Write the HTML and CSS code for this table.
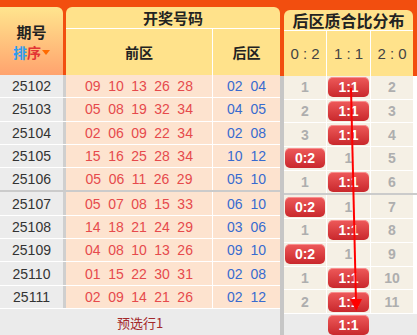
FILE: index.html
```html
<!DOCTYPE html>
<html lang="zh">
<head>
<meta charset="utf-8">
<title>后区质合比分布</title>
<link rel="stylesheet" href="styles.css">
</head>
<body>
<div class="board">
  <div class="main">
    <div class="main-head">
      <div class="h-period">
        <div class="h-title">期号</div>
        <div class="sort"><span class="s1">排</span><span class="s2">序</span><span class="caret"></span></div>
      </div>
      <div class="h-draw">
        <div class="h-draw-title">开奖号码</div>
        <div class="h-draw-sub">
          <div class="h-front">前区</div>
          <div class="h-back">后区</div>
        </div>
      </div>
    </div>
    <div class="rows">
      <div class="row"><div class="c-period">25102</div><div class="c-front"><span>09</span><span>10</span><span>13</span><span>26</span><span>28</span></div><div class="c-back"><span>02</span><span>04</span></div></div>
      <div class="row"><div class="c-period">25103</div><div class="c-front"><span>05</span><span>08</span><span>19</span><span>32</span><span>34</span></div><div class="c-back"><span>04</span><span>05</span></div></div>
      <div class="row"><div class="c-period">25104</div><div class="c-front"><span>02</span><span>06</span><span>09</span><span>22</span><span>34</span></div><div class="c-back"><span>02</span><span>08</span></div></div>
      <div class="row"><div class="c-period">25105</div><div class="c-front"><span>15</span><span>16</span><span>25</span><span>28</span><span>34</span></div><div class="c-back"><span>10</span><span>12</span></div></div>
      <div class="row sep"><div class="c-period">25106</div><div class="c-front"><span>05</span><span>06</span><span>11</span><span>26</span><span>29</span></div><div class="c-back"><span>05</span><span>10</span></div></div>
      <div class="row"><div class="c-period">25107</div><div class="c-front"><span>05</span><span>07</span><span>08</span><span>15</span><span>33</span></div><div class="c-back"><span>06</span><span>10</span></div></div>
      <div class="row"><div class="c-period">25108</div><div class="c-front"><span>14</span><span>18</span><span>21</span><span>24</span><span>29</span></div><div class="c-back"><span>03</span><span>06</span></div></div>
      <div class="row"><div class="c-period">25109</div><div class="c-front"><span>04</span><span>08</span><span>10</span><span>13</span><span>26</span></div><div class="c-back"><span>09</span><span>10</span></div></div>
      <div class="row"><div class="c-period">25110</div><div class="c-front"><span>01</span><span>15</span><span>22</span><span>30</span><span>31</span></div><div class="c-back"><span>02</span><span>08</span></div></div>
      <div class="row"><div class="c-period">25111</div><div class="c-front"><span>02</span><span>09</span><span>14</span><span>21</span><span>26</span></div><div class="c-back"><span>02</span><span>12</span></div></div>
    </div>
    <div class="foot">预选行1</div>
  </div>

  <div class="dist">
    <div class="dist-head">
      <div class="dist-inner">
        <div class="dist-title">后区质合比分布</div>
        <div class="dist-sub"><div>0 : 2</div><div>1 : 1</div><div>2 : 0</div></div>
      </div>
    </div>
    <div class="dist-rows">
      <div class="drow"><div>1</div><div><span class="badge">1:1</span></div><div>2</div></div>
      <div class="drow"><div>2</div><div><span class="badge">1:1</span></div><div>3</div></div>
      <div class="drow"><div>3</div><div><span class="badge">1:1</span></div><div>4</div></div>
      <div class="drow"><div><span class="badge">0:2</span></div><div>1</div><div>5</div></div>
      <div class="drow sep"><div>1</div><div><span class="badge">1:1</span></div><div>6</div></div>
      <div class="drow"><div><span class="badge">0:2</span></div><div>1</div><div>7</div></div>
      <div class="drow"><div>1</div><div><span class="badge">1:1</span></div><div>8</div></div>
      <div class="drow"><div><span class="badge">0:2</span></div><div>1</div><div>9</div></div>
      <div class="drow"><div>1</div><div><span class="badge">1:1</span></div><div>10</div></div>
      <div class="drow"><div>2</div><div><span class="badge">1:1</span></div><div>11</div></div>
    </div>
    <div class="dist-foot"><div></div><div><span class="badge">1:1</span></div><div></div></div>
    <svg class="trend" width="137" height="335" viewBox="0 0 137 335">
      <line x1="71" y1="88" x2="76" y2="302" stroke="#ff0000" stroke-width="2"/>
      <polygon points="70,299 82,299 76.3,311" fill="#ff0000"/>
    </svg>
  </div>
</div>
</body>
</html>
```
FILE: styles.css
```css
* { box-sizing: border-box; }
body {
  margin: 0;
  font-family: "Liberation Sans", Arial, "Noto Sans CJK SC", sans-serif;
  background: #ebebeb;
}
.board {
  display: flex;
  width: 417px;
  height: 335px;
  overflow: hidden;
  background: #ebebeb;
}

/* ---------- main table ---------- */
.main {
  width: 280px;
  display: flex;
  flex-direction: column;
}
.main-head {
  display: flex;
  gap: 3px;
  height: 75px;
  padding-top: 7px;
  background: #f24e0f;
}
.h-period {
  width: 63px;
  border-radius: 0 6px 0 0;
  background: linear-gradient(#ffe58e, #ffa36e);
  display: flex;
  flex-direction: column;
  align-items: center;
  justify-content: center;
  padding-top: 1px;
}
.h-title {
  height: 21px;
  display: flex;
  align-items: center;
  font-family: "Noto Sans CJK SC", sans-serif;
  font-size: 15px;
  font-weight: bold;
  line-height: 1;
  color: #222;
}
.sort {
  height: 21px;
  display: flex;
  align-items: center;
  font-family: "Noto Sans CJK SC", sans-serif;
  font-size: 14px;
  font-weight: bold;
  line-height: 1;
}
.s1 { color: #2e9cf0; }
.s2 { color: #e23434; }
.caret {
  width: 0;
  height: 0;
  margin-left: 1px;
  border-left: 4px solid transparent;
  border-right: 4px solid transparent;
  border-top: 5px solid #ff6a00;
}
.h-draw {
  flex: 1;
  border-radius: 6px 6px 0 0;
  background: #ffe28b;
  display: flex;
  flex-direction: column;
}
.h-draw-title {
  height: 22px;
  border-bottom: 1px solid #fff;
  display: flex;
  align-items: center;
  justify-content: center;
  font-family: "Noto Sans CJK SC", sans-serif;
  font-size: 15px;
  font-weight: bold;
  line-height: 1;
  color: #222;
}
.h-draw-sub {
  flex: 1;
  display: flex;
  font-family: "Noto Sans CJK SC", sans-serif;
  font-size: 14px;
  font-weight: bold;
  color: #222;
}
.h-front {
  width: 146px;
  display: flex;
  align-items: center;
  justify-content: center;
}
.h-back {
  flex: 1;
  border-left: 1px solid #fff;
  display: flex;
  align-items: center;
  justify-content: center;
}

.rows {
  display: flex;
  flex-direction: column;
}
.row {
  display: flex;
  height: 23.3px;
  border-bottom: 1px solid #fff;
  font-size: 14px;
}
.row.sep {
  height: 24.3px;
  border-bottom: 2px solid #cbcbcb;
}
.c-period {
  width: 66px;
  border-right: 3px solid #cfcfcf;
  background: #ececec;
  color: #333;
  display: flex;
  align-items: center;
  justify-content: center;
}
.c-front {
  width: 146px;
  background: #fde3cf;
  color: #e64a4c;
  display: flex;
  align-items: center;
  justify-content: center;
  gap: 7.5px;
}
.c-back {
  flex: 1;
  border-left: 1px solid #fff;
  background: #fde3cf;
  color: #386bcf;
  display: flex;
  align-items: center;
  justify-content: center;
  gap: 8px;
}
.foot {
  flex: 1;
  background: #ebebeb;
  color: #a3282a;
  display: flex;
  justify-content: center;
  padding-top: 6px;
  font-family: "Noto Sans CJK SC", sans-serif;
  font-size: 13px;
  line-height: 16px;
}

/* ---------- distribution ---------- */
.dist {
  width: 137px;
  position: relative;
  display: flex;
  flex-direction: column;
}
.dist-head {
  height: 76px;
  padding: 10px 4px 0 4px;
  background: #f24e0f;
}
.dist-inner {
  height: 100%;
  border-radius: 6px 6px 0 0;
  background: #ffe28b;
  display: flex;
  flex-direction: column;
}
.dist-title {
  height: 21px;
  border-bottom: 1px solid #fff;
  display: flex;
  align-items: center;
  justify-content: center;
  font-family: "Noto Sans CJK SC", sans-serif;
  font-size: 16px;
  font-weight: bold;
  line-height: 1;
  color: #222;
  white-space: nowrap;
}
.dist-sub {
  flex: 1;
  display: grid;
  grid-template-columns: 42px 43px 42px;
  column-gap: 1px;
  background: #fff;
}
.dist-sub div {
  background: #ffe28b;
  display: flex;
  align-items: center;
  justify-content: center;
  font-size: 15px;
  color: #444;
}
.dist-rows {
  border-left: 4px solid #c6c6c6;
  background: #ebe7df;
}
.drow {
  height: 23.7px;
  border-bottom: 1px solid #fff;
  display: grid;
  grid-template-columns: 42px 43px 42px 4px;
  column-gap: 1px;
  background: #fff;
}
.drow.sep {
  border-bottom: 2px solid #cbcbcb;
  height: 24.7px;
}
.drow div {
  background: #f5f0e5;
  display: flex;
  align-items: center;
  justify-content: center;
  font-size: 14px;
  font-weight: bold;
  color: #aeaeae;
}
.dist-foot {
  flex: 1;
  border-left: 4px solid #c6c6c6;
  display: grid;
  grid-template-columns: 42px 43px 42px;
  column-gap: 1px;
  background: #ebebeb;
  padding-top: 1px;
}
.dist-foot div {
  display: flex;
  justify-content: center;
  align-items: flex-start;
}
.badge {
  display: block;
  width: calc(100% - 2px);
  height: 20px;
  border-radius: 5px;
  background: linear-gradient(#ee5a5a, #c9282c);
  box-shadow: inset 0 1px 0 rgba(255, 180, 180, 0.6);
  color: #fff;
  font: bold 14px/20px "Liberation Sans", Arial, sans-serif;
  text-align: center;
}
.trend {
  position: absolute;
  left: 0;
  top: 0;
  pointer-events: none;
}
```
